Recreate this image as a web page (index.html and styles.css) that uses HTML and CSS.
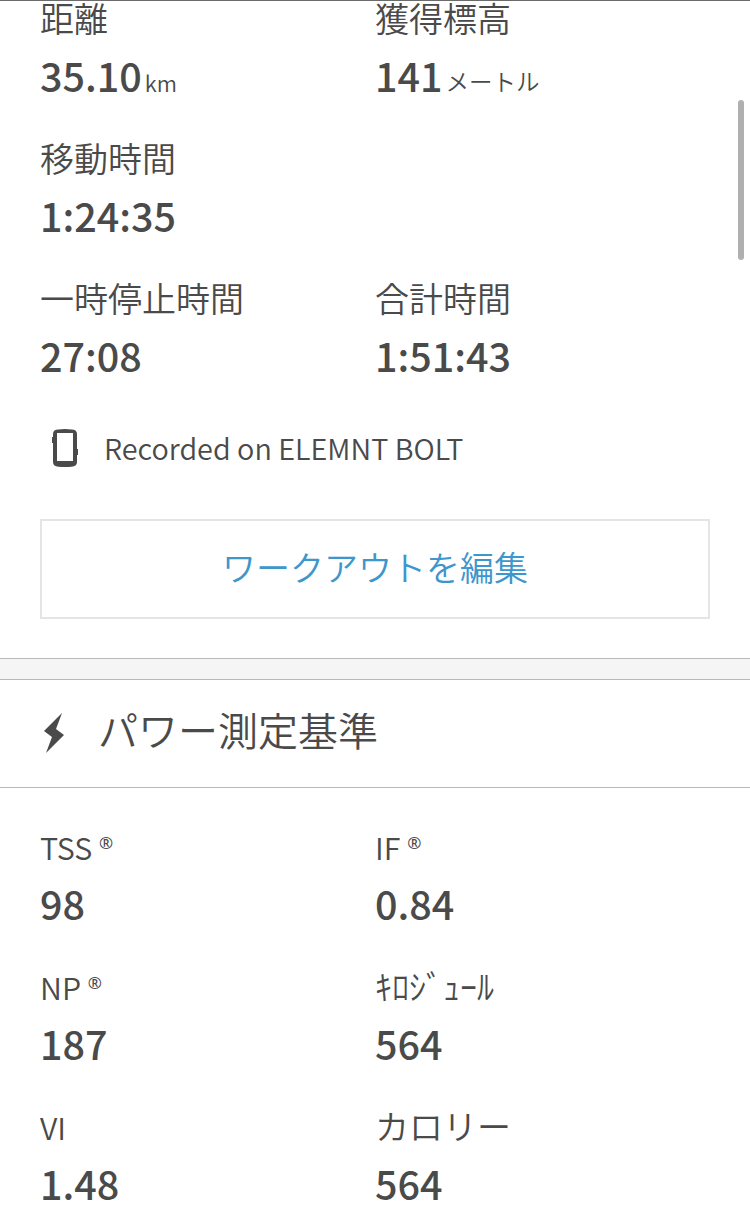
FILE: index.html
```html
<!DOCTYPE html>
<html lang="ja"><head>
    <meta charset="UTF-8">
    <meta name="viewport" content="width=device-width, initial-scale=1.0">
    <title>ワークアウト</title>
    <link rel="stylesheet" href="styles.css">
</head>
<body>
    <section class="summary">
        <div class="metrics">
            <div class="metric">
                <div class="label">距離</div>
                <div class="value">35.10<span class="unit latin">km</span></div>
            </div>
            <div class="metric">
                <div class="label">獲得標高</div>
                <div class="value">141<span class="unit">メートル</span></div>
            </div>
            <div class="metric wide">
                <div class="label">移動時間</div>
                <div class="value">1:24:35</div>
            </div>
            <div class="metric">
                <div class="label">一時停止時間</div>
                <div class="value">27:08</div>
            </div>
            <div class="metric">
                <div class="label">合計時間</div>
                <div class="value">1:51:43</div>
            </div>
        </div>
        <div class="device">
            <svg class="device-icon" width="28" height="38" viewBox="0 0 28 38">
                <path fill="#4a4a4a" fill-rule="evenodd" d="M14 0Q22 0 24.500 1.500Q26 2.500 26 5V20H27V26H26V33Q26 35.500 24.500 36.500Q22 38 14 38Q6 38 3.500 36.500Q2 35.500 2 33V14H1V8H2V5Q2 2.500 3.500 1.500Q6 0 14 0ZM6 4V32H22V4Z"/>
            </svg>
            <span>Recorded on ELEMNT BOLT</span>
        </div>
        <button class="edit">ワークアウトを編集</button>
    </section>

    <div class="divider"></div>

    <section class="power">
        <div class="heading">
            <svg class="bolt" width="22" height="40" viewBox="0 0 22 40">
                <path fill="#4a4a4a" d="M18 0 0 18 8 24 2 40 20 22 12 16Z"/>
            </svg>
            <h2>パワー測定基準</h2>
        </div>
        <div class="metrics">
            <div class="metric">
                <div class="label latin">TSS <span class="reg">®</span></div>
                <div class="value">98</div>
            </div>
            <div class="metric">
                <div class="label latin">IF <span class="reg">®</span></div>
                <div class="value">0.84</div>
            </div>
            <div class="metric">
                <div class="label latin">NP <span class="reg">®</span></div>
                <div class="value">187</div>
            </div>
            <div class="metric">
                <div class="label">ｷﾛｼﾞｭｰﾙ</div>
                <div class="value">564</div>
            </div>
            <div class="metric">
                <div class="label latin">VI</div>
                <div class="value">1.48</div>
            </div>
            <div class="metric">
                <div class="label">カロリー</div>
                <div class="value">564</div>
            </div>
        </div>
    </section>

    <div class="scrollbar"></div>
</body></html>
```
FILE: styles.css
```css
* {
    box-sizing: border-box;
}

body {
    margin: 0;
    height: 1206px;
    overflow: hidden;
    border-top: 1px solid #6b6b6b;
    background-color: #fff;
    color: #4a4a4a;
    font-family: "Noto Sans CJK JP", sans-serif;
}

.summary {
    height: 657px;
    padding: 0 40px;
}

.metrics {
    display: grid;
    grid-template-columns: 335px 335px;
    grid-auto-rows: 140px;
}

.wide {
    grid-column: span 2;
}

.label {
    height: 44px;
    font-size: 34px;
    font-weight: 350;
    line-height: 33px;
    white-space: nowrap;
}

.label.latin {
    font-size: 30.5px;
    line-height: 37px;
}

.value {
    font-size: 39.5px;
    font-weight: 500;
    line-height: 60px;
    white-space: nowrap;
}

.unit {
    margin-left: 3px;
    font-size: 23.5px;
    font-weight: 350;
    line-height: 1;
    vertical-align: 1px;
}

.unit.latin {
    font-size: 22px;
    vertical-align: 0;
}

.device {
    display: flex;
    align-items: center;
    height: 54px;
    padding-left: 11px;
    font-size: 28.8px;
    font-weight: 350;
}

.device span {
    padding-bottom: 2px;
}

.device-icon {
    margin-right: 25px;
}

.edit {
    display: block;
    width: 670px;
    height: 100px;
    margin-top: 44px;
    padding: 0 0 5px;
    border: 2px solid #e5e5e5;
    background-color: #fff;
    color: #3d96cc;
    font-family: inherit;
    font-size: 34px;
    font-weight: 350;
}

.divider {
    height: 22px;
    border-top: 1px solid #b8b8b8;
    border-bottom: 1px solid #b8b8b8;
    background-color: #f5f5f5;
}

.heading {
    display: flex;
    align-items: flex-start;
    height: 108px;
    padding: 33px 0 0 44px;
    border-bottom: 1px solid #b8b8b8;
}

.heading h2 {
    height: 42px;
    margin: 0 0 0 32px;
    overflow: hidden;
    font-size: 40px;
    font-weight: 350;
    line-height: 32px;
}

.power .metrics {
    padding: 41px 40px 0;
}

.reg {
    font-family: "Noto Sans", sans-serif;
    font-size: 17px;
    font-weight: 400;
    line-height: 1;
    vertical-align: 11px;
}

/* sits over the page at the right edge */
.scrollbar {
    position: absolute;
    top: 100px;
    right: 6px;
    width: 6px;
    height: 160px;
    border-radius: 3px;
    background-color: #b0b0b0;
}
```
